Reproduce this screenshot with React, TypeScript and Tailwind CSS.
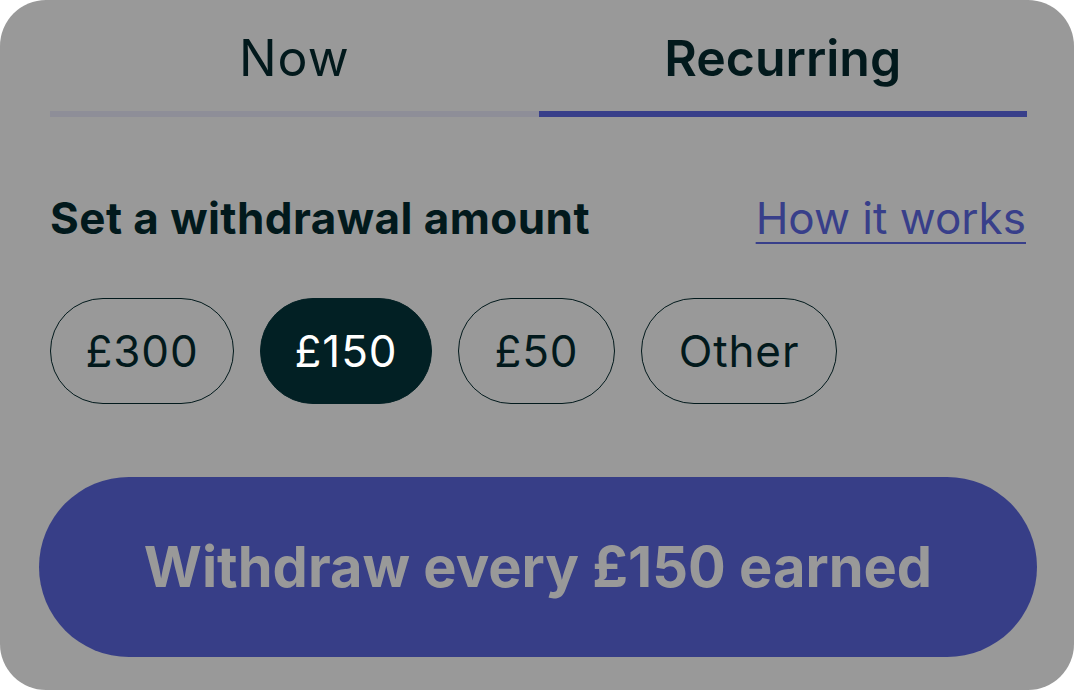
import { useState } from 'react'

const AMOUNTS = [
  { label: '£300', value: 300, width: 'w-[184px]' },
  { label: '£150', value: 150, width: 'w-[172px]' },
  { label: '£50', value: 50, width: 'w-[157px]' },
  { label: 'Other', value: 0, width: 'w-[196px]' },
]

export default function App() {
  const [tab, setTab] = useState<'now' | 'recurring'>('recurring')
  const [amount, setAmount] = useState(150)

  return (
    <div className="w-[1074px] h-[690px] bg-white font-['Inter','Liberation_Sans',sans-serif] text-[#02191c]">
      <div className="h-full rounded-[46px] bg-[#999999] pl-[50px] pr-[47px] flex flex-col">
        {/* Tabs */}
        <div className="grid grid-cols-2">
          {(['now', 'recurring'] as const).map((t) => (
            <button key={t} onClick={() => setTab(t)} className="flex flex-col">
              <span
                className={`h-[111px] flex items-center justify-center pt-[4px] text-[50px] leading-none ${
                  tab === t ? 'font-semibold' : 'font-normal tracking-[0.02em]'
                }`}
              >
                {t === 'now' ? 'Now' : 'Recurring'}
              </span>
              <span className={`h-[6px] w-full ${tab === t ? 'bg-[#383f8a]' : 'bg-[#8e8e98]'}`} />
            </button>
          ))}
        </div>

        {/* Heading */}
        <div className="flex items-center justify-between mt-[79px]">
          <h2 className="text-[44px] leading-none font-bold tracking-[0.01em]">Set a withdrawal amount</h2>
          <a
            href="#"
            className="text-[44px] leading-none text-[#383f8a] underline underline-offset-[8px] decoration-2 mr-[1px]"
          >
            How it works
          </a>
        </div>

        {/* Amount pills */}
        <div className="flex gap-[26px] mt-[58px]">
          {AMOUNTS.map((a) => {
            const active = a.value === amount
            return (
              <button
                key={a.label}
                onClick={() => setAmount(a.value)}
                className={`${a.width} h-[106px] rounded-full border flex items-center justify-center text-[44px] leading-none tracking-[0.02em] ${
                  active ? 'bg-[#022024] border-[#022024] text-white' : 'border-[#02191c]'
                }`}
              >
                {a.label}
              </button>
            )
          })}
        </div>

        {/* Submit */}
        <button className="mt-[73px] -ml-[11px] -mr-[10px] h-[180px] rounded-full bg-[#373e87] text-[#999999] text-[56px] font-bold leading-none">
          Withdraw every £{amount || 150} earned
        </button>
      </div>
    </div>
  )
}
